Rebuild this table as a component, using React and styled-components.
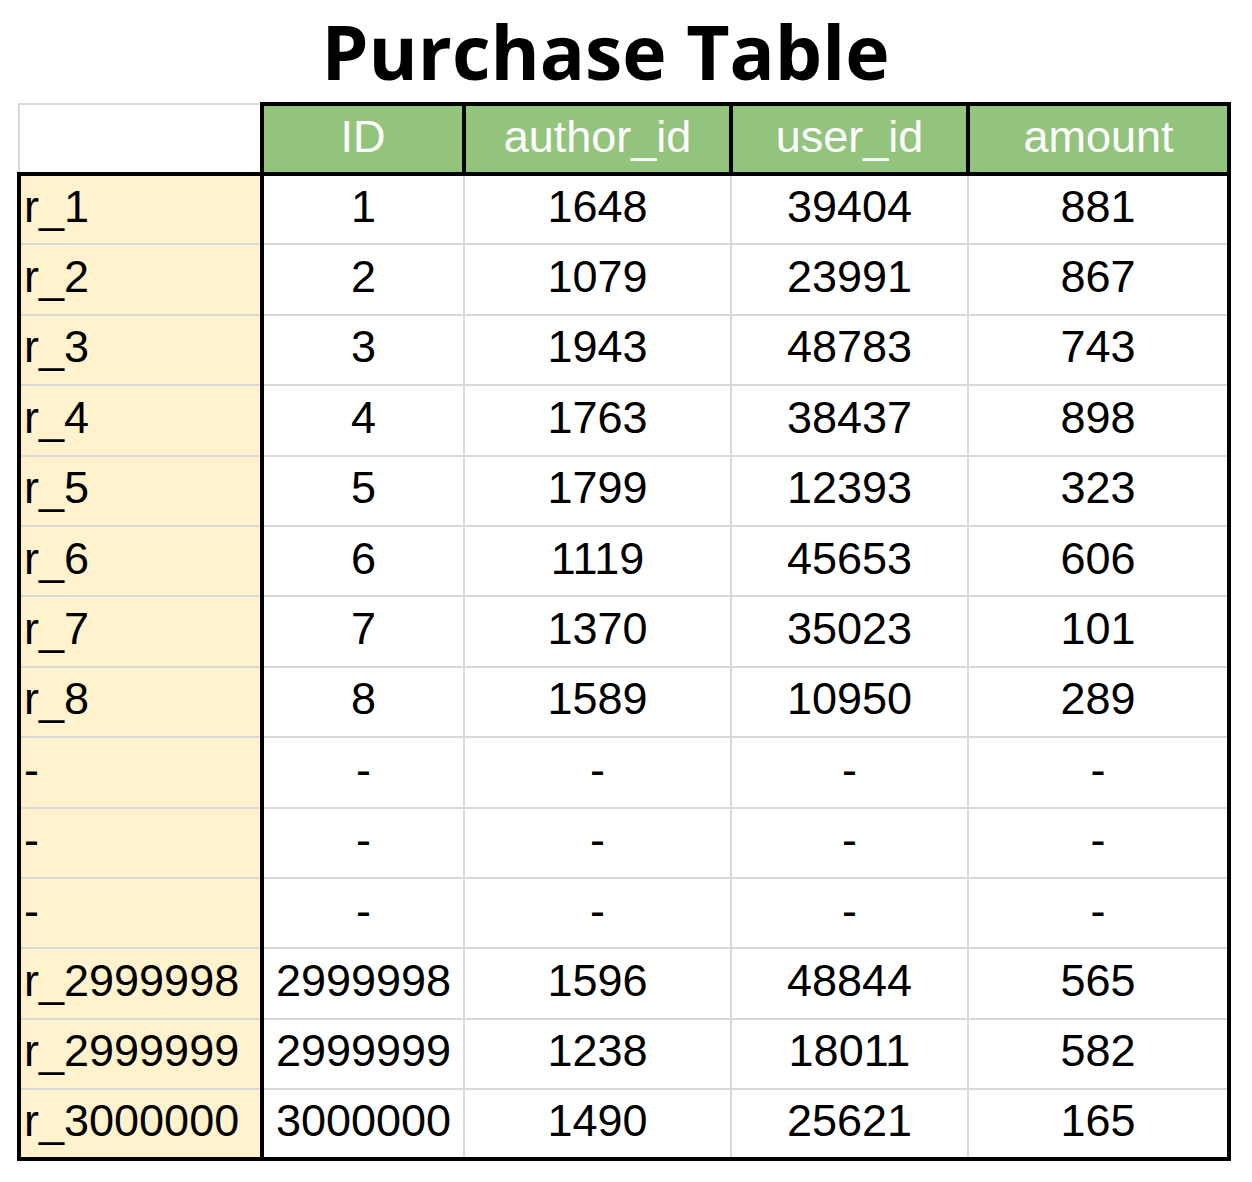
import React from 'react';
import styled, { createGlobalStyle } from 'styled-components';

const GlobalStyle = createGlobalStyle`
  html, body {
    margin: 0;
    padding: 0;
    background: #ffffff;
  }
`;

const columns = ['ID', 'author_id', 'user_id', 'amount'];
const colWidths = [243, 202, 267, 237, 261];

const rows = [
  ['r_1', '1', '1648', '39404', '881'],
  ['r_2', '2', '1079', '23991', '867'],
  ['r_3', '3', '1943', '48783', '743'],
  ['r_4', '4', '1763', '38437', '898'],
  ['r_5', '5', '1799', '12393', '323'],
  ['r_6', '6', '1119', '45653', '606'],
  ['r_7', '7', '1370', '35023', '101'],
  ['r_8', '8', '1589', '10950', '289'],
  ['-', '-', '-', '-', '-'],
  ['-', '-', '-', '-', '-'],
  ['-', '-', '-', '-', '-'],
  ['r_2999998', '2999998', '1596', '48844', '565'],
  ['r_2999999', '2999999', '1238', '18011', '582'],
  ['r_3000000', '3000000', '1490', '25621', '165'],
];

const thin = '2px solid #d9d9d9';
const thick = '4px solid #000000';

function PurchaseTable() {
  const lastRow = rows.length - 1;
  return (
    <Page>
      <Title>Purchase Table</Title>
      <Sheet>
        <colgroup>
          {colWidths.map((w, i) => (
            <col key={i} style={{ width: `${w}px` }} />
          ))}
        </colgroup>
        <thead>
          <HeadRow>
            <Corner />
            {columns.map((c) => (
              <HeadCell key={c}>{c}</HeadCell>
            ))}
          </HeadRow>
        </thead>
        <tbody>
          {rows.map((r, i) => (
            <BodyRow key={i}>
              <LabelCell $last={i === lastRow}>{r[0]}</LabelCell>
              {r.slice(1).map((v, j) => (
                <DataCell key={j} $last={i === lastRow} $lastCol={j === 3}>
                  {v}
                </DataCell>
              ))}
            </BodyRow>
          ))}
        </tbody>
      </Sheet>
    </Page>
  );
}

const Page = styled.div`
  padding: 0 0 20px 17px;
  width: 1235px;
`;

const Title = styled.h1`
  margin: 0;
  padding-right: 58px;
  text-align: center;
  font-family: "Open Sans", "Noto Sans", sans-serif;
  font-weight: 700;
  font-size: 75px;
  line-height: normal;
  color: #000000;
`;

const Sheet = styled.table`
  border-collapse: collapse;
  table-layout: fixed;
  width: 1210px;
  margin-top: 0;
  font-family: "Liberation Sans", Arial, sans-serif;
  font-size: 45px;
  color: #000000;
`;

const HeadRow = styled.tr`
  height: 70px;
`;

const BodyRow = styled.tr`
  height: 70.4px;
`;

const Cell = styled.td`
  padding: 0 0 5px 0;
  line-height: 50px;
  white-space: nowrap;
  overflow: visible;
  vertical-align: middle;
`;

const Corner = styled(Cell).attrs({ as: 'th' })`
  background: #ffffff;
  border-top: ${thin};
  border-left: ${thin};
  border-right: ${thick};
  border-bottom: ${thick};
`;

const HeadCell = styled(Cell).attrs({ as: 'th' })`
  background: #93c47d;
  color: #ffffff;
  font-weight: 400;
  text-align: center;
  border: ${thick};
`;

const LabelCell = styled(Cell)`
  background: #fff2cc;
  text-align: left;
  padding-left: 3px;
  border-top: ${thin};
  border-bottom: ${(p) => (p.$last ? thick : thin)};
  border-left: ${thick};
  border-right: ${thick};
`;

const DataCell = styled(Cell)`
  background: #ffffff;
  text-align: center;
  border-top: ${thin};
  border-left: ${thin};
  border-bottom: ${(p) => (p.$last ? thick : thin)};
  border-right: ${(p) => (p.$lastCol ? thick : thin)};
`;

export default function App() {
  return (
    <>
      <GlobalStyle />
      <PurchaseTable />
    </>
  );
}
